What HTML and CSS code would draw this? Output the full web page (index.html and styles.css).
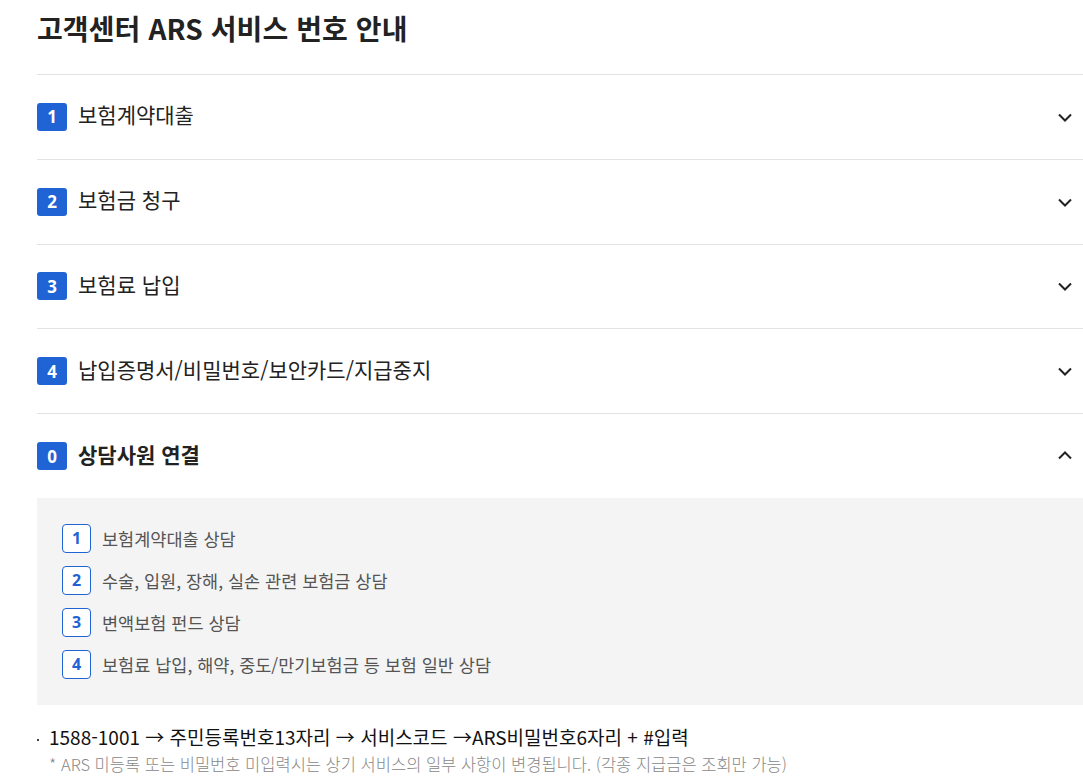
FILE: index.html
```html
<!DOCTYPE html>
<html lang="ko">
<head>
<meta charset="utf-8">
<link rel="stylesheet" href="styles.css">
</head>
<body>
<div class="page">
  <h1 class="title">고객센터 ARS 서비스 번호 안내</h1>
  <ul class="acc">
    <li class="acc-item">
      <div class="acc-head"><span class="num">1</span><span class="label">보험계약대출</span>
        <svg class="chev" viewBox="0 0 16 16" width="16" height="16"><path d="M2 5.5 L8 11.5 L14 5.5" fill="none" stroke="#222" stroke-width="2"/></svg></div>
    </li>
    <li class="acc-item">
      <div class="acc-head"><span class="num">2</span><span class="label">보험금 청구</span>
        <svg class="chev" viewBox="0 0 16 16" width="16" height="16"><path d="M2 5.5 L8 11.5 L14 5.5" fill="none" stroke="#222" stroke-width="2"/></svg></div>
    </li>
    <li class="acc-item">
      <div class="acc-head"><span class="num">3</span><span class="label">보험료 납입</span>
        <svg class="chev" viewBox="0 0 16 16" width="16" height="16"><path d="M2 5.5 L8 11.5 L14 5.5" fill="none" stroke="#222" stroke-width="2"/></svg></div>
    </li>
    <li class="acc-item">
      <div class="acc-head"><span class="num">4</span><span class="label">납입증명서/비밀번호/보안카드/지급중지</span>
        <svg class="chev" viewBox="0 0 16 16" width="16" height="16"><path d="M2 5.5 L8 11.5 L14 5.5" fill="none" stroke="#222" stroke-width="2"/></svg></div>
    </li>
    <li class="acc-item open">
      <div class="acc-head"><span class="num">0</span><span class="label strong">상담사원 연결</span>
        <svg class="chev" viewBox="0 0 16 16" width="16" height="16"><path d="M2 10.5 L8 4.5 L14 10.5" fill="none" stroke="#222" stroke-width="2"/></svg></div>
      <div class="acc-body">
        <ol class="sub">
          <li><span class="snum">1</span>보험계약대출 상담</li>
          <li><span class="snum">2</span>수술, 입원, 장해, 실손 관련 보험금 상담</li>
          <li><span class="snum">3</span>변액보험 펀드 상담</li>
          <li><span class="snum">4</span>보험료 납입, 해약, 중도/만기보험금 등 보험 일반 상담</li>
        </ol>
      </div>
    </li>
  </ul>
  <p class="guide">1588-1001 → 주민등록번호13자리 → 서비스코드 →ARS비밀번호6자리 + #입력</p>
  <p class="note">* ARS 미등록 또는 비밀번호 미입력시는 상기 서비스의 일부 사항이 변경됩니다. (각종 지급금은 조회만 가능)</p>
</div>
</body>
</html>
```

FILE: styles.css
```css
* { box-sizing: border-box; }
html, body { margin: 0; padding: 0; background: #fff; }
body {
  font-family: "Noto Sans CJK KR", "Noto Sans", sans-serif;
  color: #222;
  overflow: hidden;
}
.page {
  padding: 8px 0 0 37px;
}
.title {
  margin: 0;
  font-size: 28px;
  font-weight: 700;
  line-height: 40px;
  color: #222;
  padding-bottom: 26px;
  letter-spacing: 0.1px;
}
.acc {
  list-style: none;
  margin: 0;
  padding: 0;
  border-top: 1px solid #e3e3e3;
}
.acc-item {
  border-bottom: 1px solid #e3e3e3;
}
.acc-item.open { border-bottom: none; }
.acc-head {
  height: 83.8px;
  display: flex;
  align-items: center;
  padding-right: 10px;
}
.num {
  width: 30px;
  height: 28px;
  border-radius: 3px;
  background: #1f63d5;
  color: #fff;
  font-family: "Noto Sans", sans-serif;
  font-weight: 700;
  font-size: 17px;
  display: flex;
  align-items: center;
  justify-content: center;
  margin-right: 11px;
  flex: none;
}
.label {
  font-size: 21px;
  color: #222;
  flex: 1;
  line-height: 28px;
  padding-bottom: 5px;
}
.label.strong { font-weight: 700; }
.chev { flex: none; }
.acc-body {
  background: #f4f4f4;
  padding: 26px 0 26px 25px;
}
.sub {
  list-style: none;
  margin: 0;
  padding: 0;
  display: flex;
  flex-direction: column;
  gap: 13px;
}
.sub li {
  display: flex;
  align-items: center;
  font-size: 17.5px;
  color: #555;
  height: 29px;
}
.snum {
  width: 29px;
  height: 29px;
  border: 1px solid #1f63d5;
  border-radius: 4px;
  background: #fff;
  color: #1f63d5;
  font-family: "Noto Sans", sans-serif;
  font-weight: 700;
  font-size: 16px;
  display: flex;
  align-items: center;
  justify-content: center;
  margin-right: 11px;
  flex: none;
}
.guide {
  margin: 19px 0 0;
  font-size: 19px;
  color: #111;
  line-height: 26px;
  padding-left: 12px;
  position: relative;
}
.guide::before {
  content: "";
  position: absolute;
  left: 0;
  top: 15px;
  width: 2px;
  height: 2px;
  background: #444;
}
.note {
  margin: 2px 0 0;
  padding-left: 12px;
  font-size: 16.5px;
  font-weight: 300;
  color: #888;
  line-height: 24px;
}
```
